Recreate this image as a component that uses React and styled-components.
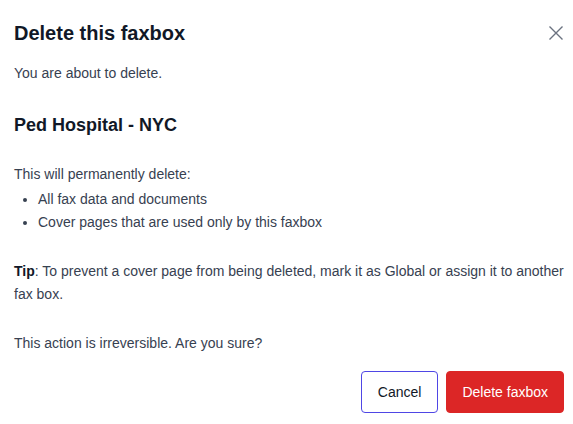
import React from "react";
import styled, { createGlobalStyle } from "styled-components";

const Global = createGlobalStyle`
  html, body { margin: 0; padding: 0; background: #ffffff; }
  body { font-family: "Liberation Sans", Arial, sans-serif; -webkit-font-smoothing: antialiased; }
  * { box-sizing: border-box; }
`;

const Dialog = styled.div`
  width: 573px;
  height: 424px;
  background: #ffffff;
  padding: 19px 9px 12px 14px;
  display: flex;
  flex-direction: column;
`;

const Header = styled.div`
  display: flex;
  justify-content: space-between;
  align-items: center;
`;

const Title = styled.h2`
  margin: 0;
  font-size: 20px;
  line-height: 28px;
  font-weight: 700;
  color: #111827;
`;

const CloseButton = styled.button`
  width: 14px;
  height: 14px;
  padding: 0;
  margin-right: 1px;
  border: none;
  background: transparent;
  color: #6b7280;
  display: flex;
  cursor: pointer;
`;

const Text = styled.p`
  margin: ${(p) => p.$top || 0}px 0 0 0;
  font-size: 14px;
  line-height: 23px;
  color: #374151;
`;

const Name = styled.h3`
  margin: 28px 0 0 0;
  font-size: 18px;
  line-height: 24px;
  font-weight: 700;
  color: #111827;
`;

const List = styled.ul`
  margin: 2px 0 0 0;
  padding-left: 24px;
  font-size: 14px;
  line-height: 23px;
  color: #374151;
`;

const Strong = styled.strong`
  font-weight: 700;
  color: #111827;
`;

const Actions = styled.div`
  margin-top: 16px;
  display: flex;
  justify-content: flex-end;
  gap: 8px;
`;

const Button = styled.button`
  height: 42px;
  padding: 0 ${(p) => (p.$danger ? 15 : 16)}px;
  border-radius: 4px;
  font-family: "Liberation Sans", Arial, sans-serif;
  font-size: 14px;
  cursor: pointer;
  border: 1px solid ${(p) => (p.$danger ? "#dc2626" : "#4f46e5")};
  background: ${(p) => (p.$danger ? "#dc2626" : "#ffffff")};
  color: ${(p) => (p.$danger ? "#ffffff" : "#111827")};
`;

export default function App() {
  return (
    <>
      <Global />
      <Dialog>
        <Header>
          <Title>Delete this faxbox</Title>
          <CloseButton aria-label="Close">
            <svg width="14" height="14" viewBox="0 0 14 14" fill="none">
              <path d="M0.5 0.5L13.5 13.5M13.5 0.5L0.5 13.5" stroke="currentColor" strokeWidth="1.4" />
            </svg>
          </CloseButton>
        </Header>
        <Text $top={15}>You are about to delete.</Text>
        <Name>Ped Hospital - NYC</Name>
        <Text $top={26}>This will permanently delete:</Text>
        <List>
          <li>All fax data and documents</li>
          <li>Cover pages that are used only by this faxbox</li>
        </List>
        <Text $top={26}>
          <Strong>Tip</Strong>: To prevent a cover page from being deleted, mark it as Global or assign it to another fax box.
        </Text>
        <Text $top={26}>This action is irreversible. Are you sure?</Text>
        <Actions>
          <Button>Cancel</Button>
          <Button $danger>Delete faxbox</Button>
        </Actions>
      </Dialog>
    </>
  );
}
